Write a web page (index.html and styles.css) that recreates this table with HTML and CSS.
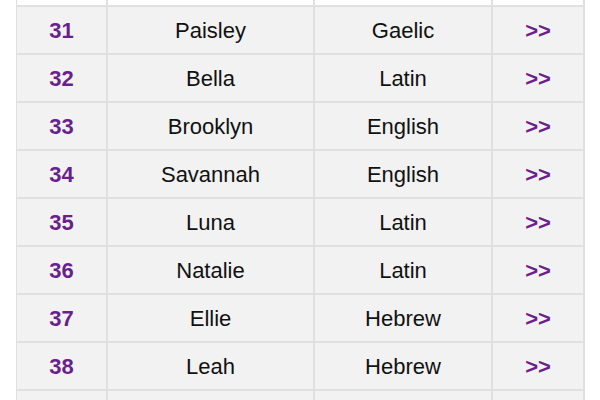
FILE: index.html
```html
<!DOCTYPE html>
<html>
<head>
<meta charset="utf-8">
<link rel="stylesheet" href="styles.css">
</head>
<body>
<div class="table">
  <div class="row head"><div class="c"></div><div class="c"></div><div class="c"></div><div class="c"></div></div>
  <div class="row"><div class="c num">31</div><div class="c">Paisley</div><div class="c">Gaelic</div><div class="c more">&gt;&gt;</div></div>
  <div class="row"><div class="c num">32</div><div class="c">Bella</div><div class="c">Latin</div><div class="c more">&gt;&gt;</div></div>
  <div class="row"><div class="c num">33</div><div class="c">Brooklyn</div><div class="c">English</div><div class="c more">&gt;&gt;</div></div>
  <div class="row"><div class="c num">34</div><div class="c">Savannah</div><div class="c">English</div><div class="c more">&gt;&gt;</div></div>
  <div class="row"><div class="c num">35</div><div class="c">Luna</div><div class="c">Latin</div><div class="c more">&gt;&gt;</div></div>
  <div class="row"><div class="c num">36</div><div class="c">Natalie</div><div class="c">Latin</div><div class="c more">&gt;&gt;</div></div>
  <div class="row"><div class="c num">37</div><div class="c">Ellie</div><div class="c">Hebrew</div><div class="c more">&gt;&gt;</div></div>
  <div class="row"><div class="c num">38</div><div class="c">Leah</div><div class="c">Hebrew</div><div class="c more">&gt;&gt;</div></div>
  <div class="row"><div class="c"></div><div class="c"></div><div class="c"></div><div class="c"></div></div>
</div>
</body>
</html>
```
FILE: styles.css
```css
html, body {
  margin: 0;
  padding: 0;
  background: #ffffff;
  overflow: hidden;
}
body {
  padding: 0 16px;
  font-family: "Liberation Sans", Arial, sans-serif;
  font-size: 22px;
  color: #111111;
}
.table {
  display: grid;
  width: 569px;
  border-left: 1px solid #e0e0e0;
  box-sizing: border-box;
}
.row {
  display: grid;
  grid-template-columns: 91px 207px 178px 92px;
  height: 48px;
  background: #f2f2f2;
  border-bottom: 2px solid #e0e0e0;
  box-sizing: border-box;
}
.row.head {
  height: 7px;
  background: #ffffff;
}
.c {
  display: flex;
  align-items: center;
  justify-content: center;
  border-right: 2px solid #e0e0e0;
  padding-top: 2px;
}
.num, .more {
  font-weight: bold;
  color: #6a1f8c;
}
```
